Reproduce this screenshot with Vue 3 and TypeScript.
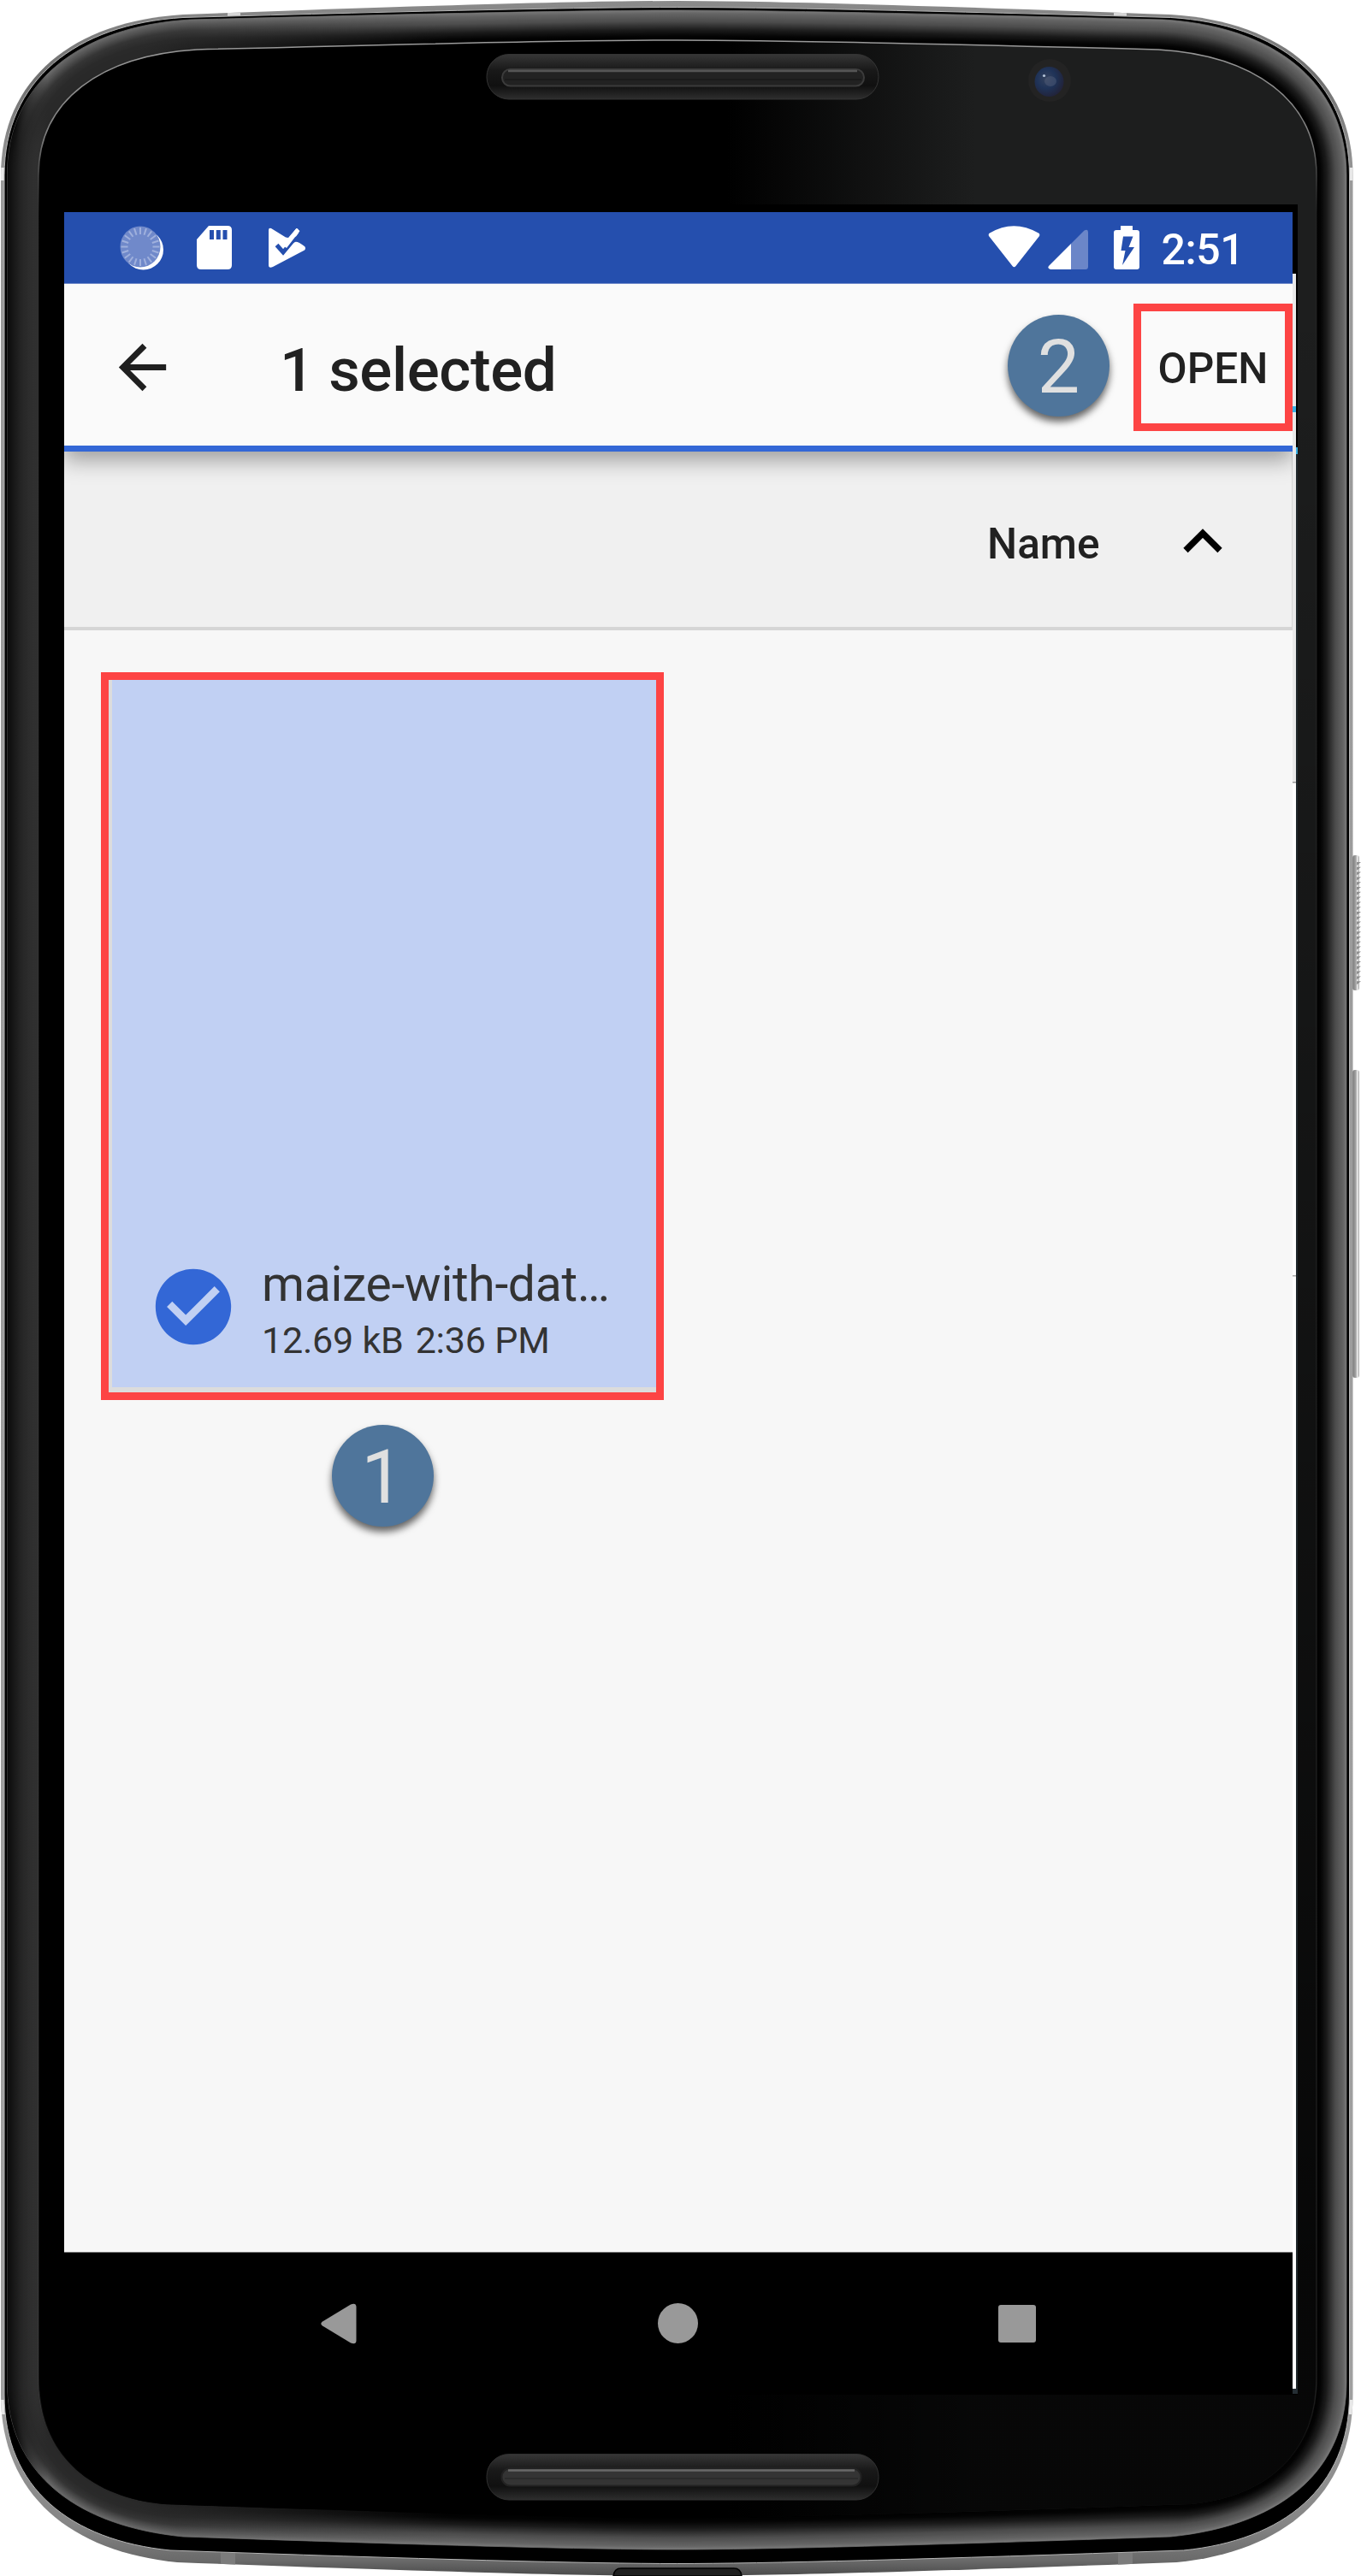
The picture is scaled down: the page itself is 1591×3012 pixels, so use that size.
<script setup lang="ts">
import { ref } from 'vue'

type RGB = [number, number, number]
interface Outline {
  l: number
  r: number
  t: number
  b: number
  tcx: number
  tcy: number
  tsy: number
  bcx: number
  bcy: number
  bsy: number
}
interface Layer {
  id: string
  d: string
  left: string
  corner: string
  rest: string
}

const outer: Outline = { l: 1, r: 1581.5, t: 1, b: 3012, tcx: 214, tcy: 17, tsy: 205, bcx: 207, bcy: 2996, bsy: 2800 }
const innerMetal: Outline = { l: 5, r: 1577.5, t: 8.5, b: 2997.5, tcx: 214, tcy: 20.5, tsy: 205, bcx: 199, bcy: 2982, bsy: 2800 }
const bezel: Outline = { l: 8.5, r: 1574, t: 12, b: 2981, tcx: 222, tcy: 23, tsy: 205, bcx: 214, bcy: 2966, bsy: 2785 }
const glass: Outline = { l: 45, r: 1539, t: 47, b: 2944, tcx: 230, tcy: 58, tsy: 205, bcx: 191, bcy: 2928, bsy: 2780 }

const K = 0.6

function outlinePath(o: Outline): string {
  const mid = (o.l + o.r) / 2
  const mx = (x: number) => o.l + o.r - x
  const tkx = o.tcx - (o.tcx - o.l) * K
  const tky = o.tcy + (o.tcx - o.l) * K * 0.06
  const tsk = o.tsy - (o.tsy - o.tcy) * K
  const bkx = o.bcx - (o.bcx - o.l) * K
  const bky = o.bcy - (o.bcx - o.l) * K * 0.1
  const bsk = o.bsy + (o.bcy - o.bsy) * K
  return [
    `M${o.l} ${o.tsy}`,
    `C${o.l} ${tsk} ${tkx} ${tky} ${o.tcx} ${o.tcy}`,
    `Q${mid - 150} ${o.t} ${mid} ${o.t}`,
    `Q${mid + 150} ${o.t} ${mx(o.tcx)} ${o.tcy}`,
    `C${mx(tkx)} ${tky} ${o.r} ${tsk} ${o.r} ${o.tsy}`,
    `L${o.r} ${o.bsy}`,
    `C${o.r} ${bsk} ${mx(bkx)} ${bky} ${mx(o.bcx)} ${o.bcy}`,
    `Q${mid + 150} ${o.b} ${mid} ${o.b}`,
    `Q${mid - 150} ${o.b} ${o.bcx} ${o.bcy}`,
    `C${bkx} ${bky} ${o.l} ${bsk} ${o.l} ${o.bsy}Z`,
  ].join('')
}

function mixOutline(a: Outline, b: Outline, t: number): Outline {
  const m = (k: keyof Outline) => a[k] + (b[k] - a[k]) * t
  return {
    l: m('l'), r: m('r'), t: m('t'), b: m('b'), tcx: m('tcx'),
    tcy: m('tcy'), tsy: m('tsy'), bcx: m('bcx'), bcy: m('bcy'), bsy: m('bsy'),
  }
}

function ramp(stops: [number, number][], t: number): string {
  let v = stops[stops.length - 1][1]
  for (let i = 1; i < stops.length; i++) {
    const [t0, v0] = stops[i - 1]
    const [t1, v1] = stops[i]
    if (t <= t1) {
      v = v0 + ((v1 - v0) * (t - t0)) / (t1 - t0)
      break
    }
  }
  const c: RGB = [v, v, v]
  return `rgb(${c.map((n) => Math.round(n)).join(',')})`
}

const STEPS = 34
const layers: Layer[] = Array.from({ length: STEPS }, (_, i) => {
  const t = i / STEPS
  return {
    id: `rim${i}`,
    d: outlinePath(mixOutline(bezel, glass, t)),
    left: ramp([[0, 12], [0.2, 24], [0.6, 42], [0.85, 56], [1, 66]], t),
    corner: ramp([[0, 105], [0.35, 52], [0.6, 42], [1, 40]], t),
    rest: ramp([[0, 118], [0.1, 100], [0.35, 76], [0.65, 26], [0.85, 4], [1, 0]], t),
  }
})

const outerPath = outlinePath(outer)
const innerMetalPath = outlinePath(innerMetal)
const bezelPath = outlinePath(bezel)
const glassPath = outlinePath(glass)

const spokes = Array.from({ length: 20 }, (_, i) => i * 18)
const ridges = Array.from({ length: 25 }, (_, i) => 1008 + i * 5.8)

const time = ref('2:51')
const title = ref('1 selected')
const file = ref({ name: 'maize-with-dat…', size: '12.69 kB', time: '2:36 PM' })
</script>

<template>
  <div class="device">
    <svg class="frame" width="1591" height="3012" viewBox="0 0 1591 3012" aria-hidden="true">
      <defs>
        <linearGradient id="metal" x1="0" y1="0" x2="0" y2="1">
          <stop offset="0" stop-color="#8b8b8b" />
          <stop offset="0.03" stop-color="#6f6f6f" />
          <stop offset="0.07" stop-color="#9a9a9a" />
          <stop offset="0.93" stop-color="#a0a0a0" />
          <stop offset="0.98" stop-color="#858585" />
          <stop offset="0.994" stop-color="#6a6a6a" />
          <stop offset="1" stop-color="#4a4a4a" />
        </linearGradient>
        <linearGradient v-for="l in layers" :id="l.id" :key="l.id" gradientUnits="userSpaceOnUse" x1="0" y1="0" x2="1591" y2="0">
          <stop offset="0.012" :stop-color="l.left" />
          <stop offset="0.035" :stop-color="l.corner" />
          <stop offset="0.1" :stop-color="l.corner" />
          <stop offset="0.33" :stop-color="l.rest" />
        </linearGradient>
        <linearGradient id="sheen" gradientUnits="userSpaceOnUse" x1="850" y1="0" x2="1140" y2="0">
          <stop offset="0" stop-color="#1d1e1e" stop-opacity="0" />
          <stop offset="0.5" stop-color="#1d1e1e" stop-opacity="0.5" />
          <stop offset="1" stop-color="#1d1e1e" />
        </linearGradient>
        <linearGradient id="shade" x1="0" y1="0" x2="0" y2="1">
          <stop offset="0.1" stop-color="#000" stop-opacity="0" />
          <stop offset="0.9" stop-color="#000" stop-opacity="0.76" />
        </linearGradient>
        <linearGradient id="edge" x1="0" y1="0" x2="0" y2="1">
          <stop offset="0" stop-color="#9a9a9a" />
          <stop offset="0.04" stop-color="#7d7d7d" />
          <stop offset="0.07" stop-color="#333" stop-opacity="0.3" />
          <stop offset="0.95" stop-color="#555" stop-opacity="0.3" />
          <stop offset="1" stop-color="#000" stop-opacity="0" />
        </linearGradient>
        <linearGradient id="grille" x1="0" y1="0" x2="0" y2="1">
          <stop offset="0" stop-color="#363636" />
          <stop offset="0.35" stop-color="#191919" />
          <stop offset="0.7" stop-color="#101010" />
          <stop offset="1" stop-color="#2e2e2e" />
        </linearGradient>
        <linearGradient id="key" x1="0" y1="0" x2="1" y2="0">
          <stop offset="0" stop-color="#777" />
          <stop offset="0.5" stop-color="#a5a5a5" />
          <stop offset="0.75" stop-color="#f5f5f5" />
          <stop offset="1" stop-color="#999" />
        </linearGradient>
        <radialGradient id="lens" cx="0.4" cy="0.4" r="0.65">
          <stop offset="0" stop-color="#36435e" />
          <stop offset="0.5" stop-color="#1f3358" />
          <stop offset="1" stop-color="#222238" />
        </radialGradient>
        <clipPath id="body"><path :d="outerPath" /></clipPath>
      </defs>

      <rect x="1581" y="1000" width="8" height="158" rx="3" fill="url(#key)" />
      <path v-for="y in ridges" :key="y" :d="`M1586 ${y}h5l-5 4z`" fill="#8f8f8f" />
      <rect x="1581" y="1251" width="8" height="360" rx="3" fill="url(#key)" />

      <path :d="outerPath" fill="url(#metal)" />
      <g clip-path="url(#body)">
        <path d="M266 0h15v30h-15zM1302 0h15v30h-15z" fill="#d6d6d6" />
        <path d="M0 196h8v15H0zM1574 196h10v15h-10zM0 2806h9v17H0zM1573 2806h10v17h-10z" fill="#e8e8e8" />
        <path d="M258 2980h17v30h-17zM1307 2980h17v30h-17z" fill="#7c7c7c" />
      </g>
      <path :d="innerMetalPath" fill="#000" stroke="#b5b5b5" stroke-width="1" />
      <path :d="bezelPath" fill="none" stroke="#555" stroke-width="1" />
      <path v-for="l in layers" :key="l.id" :d="l.d" :fill="`url(#${l.id})`" />
      <path :d="glassPath" fill="#000" />
      <path :d="glassPath" fill="url(#sheen)" />
      <path :d="glassPath" fill="url(#shade)" />
      <path :d="glassPath" fill="none" stroke="url(#edge)" stroke-width="1.5" />

      <rect x="569" y="63.5" width="458" height="52.5" rx="26" fill="url(#grille)" stroke="#343434" />
      <rect x="587" y="81" width="423" height="19.5" rx="9.5" fill="#222" stroke="#3b3b3b" stroke-width="2" />
      <path d="M594 83h408" stroke="#555" stroke-width="2.5" />
      <path d="M590 93h417" stroke="#1a1a1a" stroke-width="1.5" />

      <rect x="569" y="2869.5" width="458" height="53.5" rx="26" fill="url(#grille)" stroke="#303030" />
      <rect x="586.5" y="2886" width="420" height="20.5" rx="10" fill="#343434" stroke="#222" stroke-width="2" />
      <path d="M594 2888.5h405" stroke="#686868" stroke-width="2.5" />
      <path d="M590 2898h413" stroke="#282828" stroke-width="1.5" />

      <circle cx="1227" cy="94" r="25" fill="#232323" />
      <ellipse cx="1226.5" cy="95.5" rx="17" ry="17.5" fill="url(#lens)" />
      <ellipse cx="1228" cy="95" rx="7" ry="6" fill="#56617c" opacity="0.45" />
      <circle cx="1220.5" cy="88.5" r="1.6" fill="#b4c3d8" />

      <path d="M717 3012q1-9 9-9h132q8 0 9 9z" fill="#202020" stroke="#000" stroke-width="1.5" />

      <rect x="66" y="239" width="1451" height="2561" fill="#000" />
      <rect x="1515" y="530" width="2" height="2269" fill="#20282c" />
      <rect x="1511" y="2793" width="6" height="6" fill="#252e34" />
      <rect x="1511" y="320" width="4" height="2473" fill="#e9e9e9" />
      <rect x="1511" y="914" width="4" height="1879" fill="#fff" />
      <rect x="1511" y="914" width="4" height="1.5" fill="#999" />
      <rect x="1511" y="1491" width="4" height="1.5" fill="#aaa" />
      <rect x="1511" y="475" width="4" height="7" fill="#38b0e4" />
      <rect x="1515" y="523" width="2" height="8" fill="#38b0e4" />
    </svg>

    <main class="screen">
      <header class="status">
        <div class="notices">
          <svg class="sync" width="52" height="52" viewBox="0 0 52 52">
            <circle cx="27.5" cy="28" r="23.5" fill="#fff" />
            <ellipse cx="24" cy="24.5" rx="23.5" ry="24" fill="#7089ca" />
            <path
              v-for="a in spokes"
              :key="a"
              d="M24 2v8"
              stroke="#9fb0dd"
              stroke-width="2"
              :transform="`rotate(${a} 24 24.5)`"
            />
          </svg>
          <svg class="sd" width="41" height="51" viewBox="0 0 41 51">
            <path d="M14 0H36q5 0 5 5V46q0 5-5 5H5q-5 0-5-5V16Z" fill="#fff" />
            <path d="M15 5h5v11h-5zM22.8 5h5v11h-5zM30.5 5h5v11h-5z" fill="#254fae" />
          </svg>
          <svg class="play" width="44" height="47" viewBox="0 0 44 47">
            <path
              d="M0 3Q0 0 3 1L20 11.5 23 12 32 1.500Q34 0 35.500 4L35 6.500 16.500 31 8 21 10.500 18 16.500 23.500 31 17Q34 16 42 22 44 24 42 26.500L5 46Q0 48 0 44Z"
              fill="#fff"
            />
            <path d="M9.500 20.500 17 29 32 11" fill="none" stroke="#254fae" stroke-width="5" />
            <path d="M14 16 20.500 20.500 34.500 2.500" fill="none" stroke="#fff" stroke-width="5" />
          </svg>
        </div>
        <div class="signals">
          <svg width="61" height="49" viewBox="0 0 61 49">
            <path d="M1 12Q0 9.500 2 8.500 30-8 59 8.500 61 9.500 60 12L32.500 47Q30.500 49.500 28.500 47Z" fill="#fff" />
          </svg>
          <svg class="cell" width="47" height="47" viewBox="0 0 47 47">
            <path d="M27 17 42.500 1.500Q47-1 47 4V44q0 3-3 3H27Z" fill="#6b86c8" />
            <path d="M27 17V47H3Q-1 46 1 43Z" fill="#fff" />
          </svg>
          <svg class="battery" width="30" height="51" viewBox="0 0 30 51">
            <path d="M8 0H22V5H27q3 0 3 3V48q0 3-3 3H3q-3 0-3-3V8q0-3 3-3H8Z" fill="#fff" />
            <path d="M11 12.500H22.500L17.500 25H24L10 46 13.500 29H8.500Z" fill="#254fae" />
          </svg>
          <span class="clock">{{ time }}</span>
        </div>
      </header>

      <nav class="appbar">
        <svg class="back" width="83" height="83" viewBox="0 0 24 24">
          <path d="M20 11H7.830l5.590-5.590L12 4l-8 8 8 8 1.410-1.410L7.830 13H20v-2z" fill="#202020" />
        </svg>
        <h1 class="title">{{ title }}</h1>
        <span class="badge two">2</span>
        <button class="open">OPEN</button>
      </nav>

      <div class="sort">
        <span class="sort-name">Name</span>
        <svg class="chevron" width="46" height="29" viewBox="0 0 46 29">
          <path d="M3 25.500 23 5.500 43 25.500" fill="none" stroke="#000" stroke-width="7.500" />
        </svg>
      </div>

      <section class="files">
        <article class="card">
          <div class="tile">
            <svg class="check" width="106" height="106" viewBox="0 0 24 24">
              <path
                d="M12 2C6.480 2 2 6.480 2 12s4.480 10 10 10 10-4.480 10-10S17.520 2 12 2zm-2 15l-5-5 1.410-1.410L10 14.170l7.590-7.590L19 8l-9 9z"
                fill="#3367d6"
              />
            </svg>
            <div class="meta">
              <span class="fname">{{ file.name }}</span>
              <span class="fdetail"><span>{{ file.size }}</span><span>{{ file.time }}</span></span>
            </div>
          </div>
        </article>
        <span class="badge one">1</span>
      </section>

      <footer class="navbar">
        <svg width="42" height="48" viewBox="0 0 42 48">
          <path d="M2 21.500 35 1.500Q41-1 41.500 4V44Q41 49 35 46.500L2 26.500Q-1.500 24 2 21.500Z" fill="#999" />
        </svg>
        <span class="home"></span>
        <span class="recent"></span>
      </footer>
    </main>
  </div>
</template>

<style>
html,
body {
  margin: 0;
  background: #fff;
}
</style>

<style scoped>
.device {
  position: relative;
  box-sizing: border-box;
  width: 1591px;
  height: 3012px;
  padding: 248px 80px 212px 75px;
  overflow: hidden;
  font-family: Roboto, 'Liberation Sans', sans-serif;
}
.frame {
  position: absolute;
  inset: 0;
}
svg {
  display: block;
  flex: none;
}
.screen {
  position: relative;
  display: flex;
  flex-direction: column;
  width: 1436px;
  height: 2552px;
  background: #f7f7f7;
}
.status {
  box-sizing: border-box;
  flex: none;
  display: flex;
  justify-content: space-between;
  height: 84px;
  padding: 16px 58.5px 0 65px;
  background: #254fae;
  border-bottom: 1px solid #6f88c8;
}
.notices,
.signals {
  display: flex;
  align-items: flex-start;
}
.sd {
  margin-left: 37.5px;
}
.play {
  margin: 2px 0 0 43px;
}
.cell {
  margin: 4px 0 0 8.5px;
}
.battery {
  margin-left: 30px;
}
.clock {
  width: 95px;
  margin-left: 26px;
  line-height: 56px;
  font-size: 50px;
  font-weight: 500;
  letter-spacing: -0.4px;
  color: #fff;
  white-space: nowrap;
}
.appbar {
  position: relative;
  z-index: 1;
  box-sizing: border-box;
  flex: none;
  display: flex;
  align-items: center;
  height: 196px;
  padding: 0 0 4px 50px;
  background: #fafafa;
  border-bottom: 7.5px solid #3367d6;
  box-shadow: 0 10px 24px rgba(0, 0, 0, 0.35);
  clip-path: inset(0 0 -40px 0);
}
.back {
  margin-top: 10px;
}
.title {
  flex: 1;
  margin: 17px 0 0 119px;
  font-size: 71px;
  line-height: 84px;
  font-weight: 500;
  letter-spacing: -0.4px;
  color: #212121;
  white-space: nowrap;
}
.badge {
  display: block;
  width: 119px;
  height: 119px;
  border-radius: 50%;
  background: #4f759b;
  box-shadow: 0 6px 8px rgba(0, 0, 0, 0.6);
  color: #e0e0e0;
  font-size: 88px;
  line-height: 122px;
  text-align: center;
}
.two {
  margin: 5px 28px 0 0;
}
.open {
  box-sizing: border-box;
  width: 186px;
  height: 149px;
  margin-top: 9px;
  padding: 3px 0 0;
  border: 9px solid #fd4444;
  background: transparent;
  font-family: inherit;
  font-size: 49.5px;
  font-weight: 500;
  color: #212121;
}
.sort {
  box-sizing: border-box;
  flex: none;
  display: flex;
  justify-content: flex-end;
  align-items: center;
  height: 209px;
  padding: 10px 81.5px 0 0;
  background: #f0f0f0;
  border-bottom: 4px solid #d5d5d5;
  border-right: 1px solid #d5d5d5;
}
.sort-name {
  margin-right: 97px;
  font-size: 49.5px;
  line-height: 60px;
  font-weight: 500;
  color: #212121;
}
.chevron {
  margin-bottom: 6px;
}
.files {
  flex: 1;
  padding: 49px 0 0 42.5px;
}
.card {
  box-sizing: border-box;
  width: 658px;
  height: 851px;
  border: 9.5px solid #fd4444;
  background: #dcdcdc;
  padding: 0 0 6px 4px;
}
.tile {
  box-sizing: border-box;
  display: flex;
  align-items: flex-end;
  height: 100%;
  padding: 0 0 26px 42px;
  background: #c1d0f3;
}
.check {
  margin-bottom: 15px;
}
.meta {
  display: flex;
  flex-direction: column;
  margin-left: 27.5px;
  color: #333;
  white-space: nowrap;
}
.fname {
  margin-bottom: 3px;
  font-size: 57px;
  line-height: 66px;
  letter-spacing: -0.3px;
}
.fdetail {
  display: flex;
  gap: 14px;
  font-size: 43px;
  line-height: 58px;
  letter-spacing: -0.2px;
}
.one {
  margin: 28.5px 0 0 270px;
}
.navbar {
  box-sizing: border-box;
  flex: none;
  display: flex;
  align-items: flex-start;
  height: 167px;
  padding: 59px 0 0 300px;
  background: #000;
  border-top: 1px solid #777;
}
.home {
  width: 47px;
  height: 47px;
  margin-left: 352px;
  border-radius: 50%;
  background: #999;
}
.recent {
  width: 44px;
  height: 44px;
  margin: 2px 0 0 351px;
  border-radius: 3px;
  background: #999;
}
</style>
